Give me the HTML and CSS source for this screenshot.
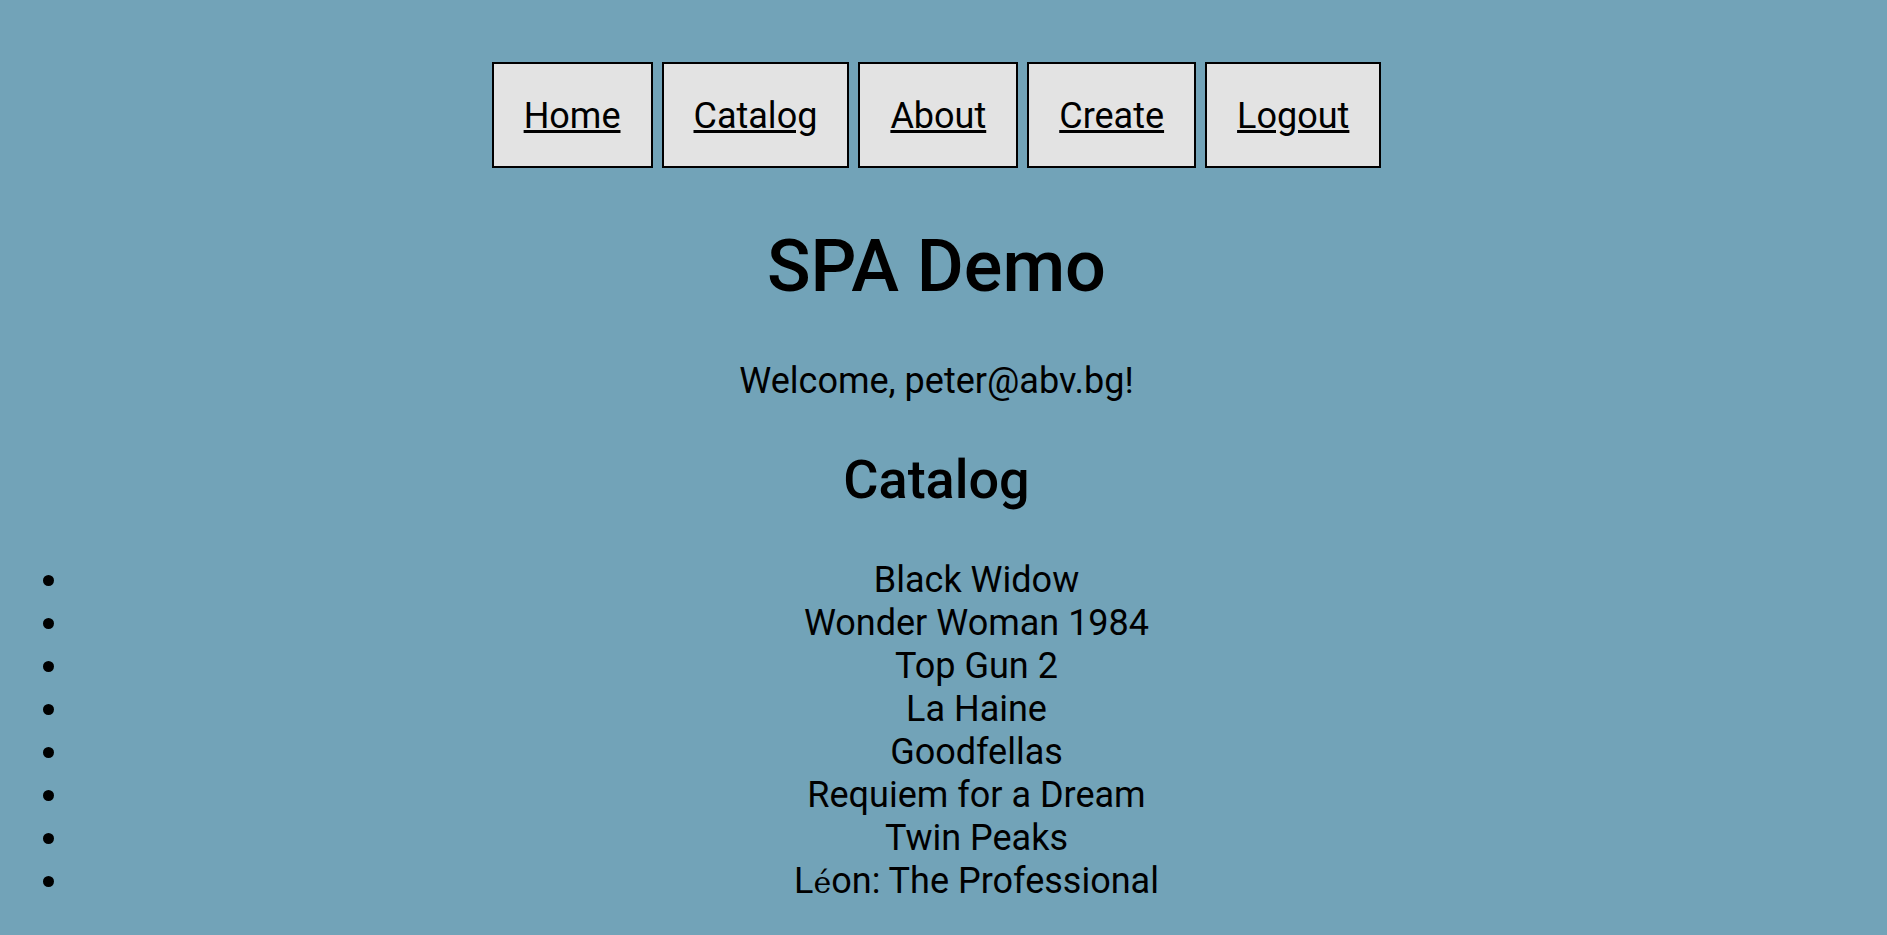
FILE: index.html
```html
<!DOCTYPE html>
<html lang="en">
<head>
<meta charset="utf-8">
<title>SPA Demo</title>
<link rel="stylesheet" href="styles.css">
</head>
<body>
<div class="page">
  <nav class="nav">
    <a class="nav-link" href="#">Home</a>
    <a class="nav-link" href="#">Catalog</a>
    <a class="nav-link" href="#">About</a>
    <a class="nav-link" href="#">Create</a>
    <a class="nav-link" href="#">Logout</a>
  </nav>
  <main class="main">
    <h1 class="title">SPA Demo</h1>
    <p class="welcome">Welcome, peter@abv.bg!</p>
    <h2 class="section-title">Catalog</h2>
  </main>
</div>
<ul class="catalog">
  <li>Black Widow</li>
  <li>Wonder Woman 1984</li>
  <li>Top Gun 2</li>
  <li>La Haine</li>
  <li>Goodfellas</li>
  <li>Requiem for a Dream</li>
  <li>Twin Peaks</li>
  <li>L<span class="accent">é</span>on: The Professional</li>
</ul>
</body>
</html>
```
FILE: styles.css
```css
html, body {
  margin: 0;
  padding: 0;
}
body {
  background: #72a3b8;
  color: #000;
  font-family: Roboto, "Noto Sans", sans-serif;
  font-size: 36px;
  min-height: 935px;
}
.page {
  padding-right: 14px;
  text-align: center;
}
.nav {
  display: flex;
  justify-content: center;
  gap: 9px;
  padding-top: 62px;
}
.nav-link {
  display: block;
  background: #e3e3e3;
  border: 2px solid #000;
  padding: 32px 30px 29px;
  color: #000;
  font-size: 36px;
  line-height: 41px;
  text-decoration: underline;
}
.main {
  padding-top: 44px;
}
.title {
  margin: 0;
  font-size: 72px;
  font-weight: 500;
  line-height: 110px;
}
.welcome {
  margin: 38px 0 0;
  line-height: 42px;
}
.section-title {
  margin: 43px 0 0;
  font-size: 54px;
  font-weight: 500;
  line-height: 70px;
}
.catalog {
  margin: 44px 0 0;
  padding: 0 6px 0 72px;
  text-align: center;
  line-height: 43px;
}
.accent {
  font-family: "DejaVu Serif", serif;
  font-size: 30px;
}
```
